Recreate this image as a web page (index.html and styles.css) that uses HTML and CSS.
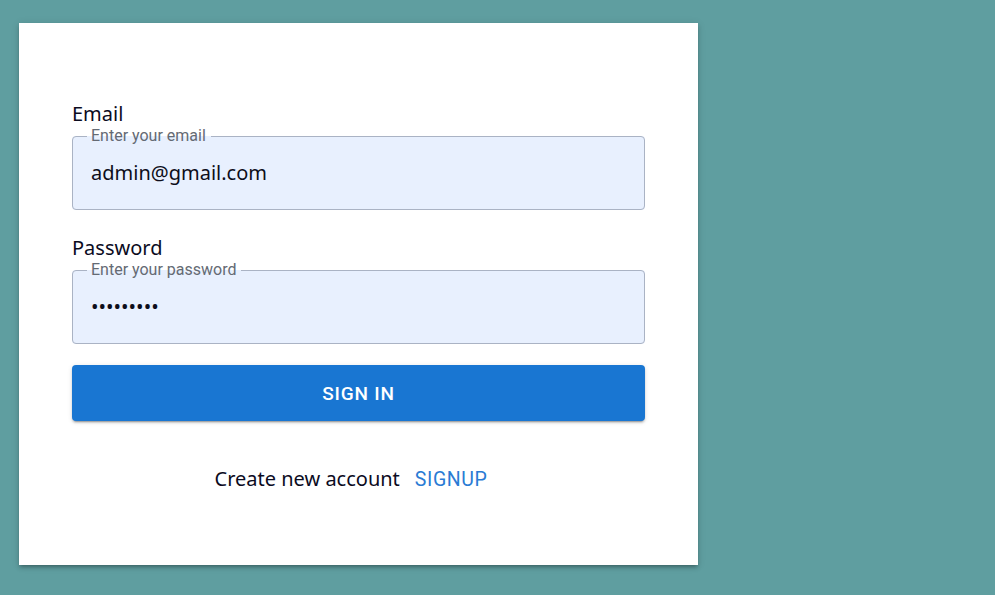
FILE: index.html
```html
<!DOCTYPE html>
<html lang="en">
<head>
<meta charset="utf-8">
<title>Sign in</title>
<link rel="stylesheet" href="styles.css">
</head>
<body>
<div class="card">
  <form class="form">
    <div class="label">Email</div>
    <fieldset class="field">
      <legend class="legend">Enter your email</legend>
      <input class="input" type="text" value="admin@gmail.com">
    </fieldset>
    <div class="label label-gap">Password</div>
    <fieldset class="field">
      <legend class="legend">Enter your password</legend>
      <input class="input input-pass" type="password" value="123456789">
    </fieldset>
    <button class="btn" type="button">Sign in</button>
    <div class="signup-row">
      <span class="signup-text">Create new account</span>
      <a class="signup-link" href="#">Signup</a>
    </div>
  </form>
</div>
</body>
</html>
```

FILE: styles.css
```css
html, body {
  margin: 0;
  padding: 0;
}
body {
  background: #5f9ea0;
  padding: 23px 0 0 19px;
  height: 595px;
  box-sizing: border-box;
  font-family: "Noto Sans", "Open Sans", sans-serif;
}
.card {
  width: 679px;
  height: 542px;
  box-sizing: border-box;
  background: #fff;
  padding: 79px 53px 0;
  box-shadow: 0 3px 3px -2px rgba(0,0,0,0.2), 0 3px 4px 0 rgba(0,0,0,0.14), 0 1px 8px 0 rgba(0,0,0,0.12);
}
.form {
  display: flex;
  flex-direction: column;
}
.label {
  font-size: 20px;
  line-height: 24px;
  color: #0b0b1e;
  margin-bottom: 1px;
}
.label-gap {
  margin-top: 26px;
}
.field {
  margin: 0;
  padding: 0;
  border: 1px solid #aab3c4;
  border-radius: 4px;
  background: #e8f0fe;
  min-width: 0;
}
.legend {
  font-family: Roboto, sans-serif;
  font-size: 16px;
  line-height: 18px;
  color: #646a74;
  padding: 0 5px 0 4px;
  margin-left: 14px;
}
.input {
  display: block;
  width: 100%;
  height: 64px;
  box-sizing: border-box;
  border: 0;
  outline: none;
  background: transparent;
  padding: 0 18px 10px 18px;
  font-family: "Noto Sans", "Open Sans", sans-serif;
  font-size: 20px;
  color: #0d0d1a;
}
.input-pass {
  letter-spacing: 0;
}
.btn {
  margin-top: 21px;
  height: 56px;
  border: 0;
  border-radius: 4px;
  background: #1976d2;
  color: #fff;
  font-family: Roboto, sans-serif;
  font-weight: 500;
  font-size: 19px;
  letter-spacing: 0.8px;
  text-transform: uppercase;
  box-shadow: 0 3px 1px -2px rgba(0,0,0,0.2), 0 2px 2px 0 rgba(0,0,0,0.14), 0 1px 5px 0 rgba(0,0,0,0.12);
  cursor: pointer;
}
.signup-row {
  margin-top: 46px;
  padding-right: 7px;
  display: flex;
  justify-content: center;
  align-items: center;
}
.signup-text {
  font-size: 20px;
  line-height: 24px;
  color: #0b0b1e;
}
.signup-link {
  margin-left: 7px;
  padding: 0 8px;
  font-family: Roboto, sans-serif;
  font-size: 19.5px;
  letter-spacing: 0.6px;
  text-transform: uppercase;
  text-decoration: none;
  color: #2a7bd4;
}
```
